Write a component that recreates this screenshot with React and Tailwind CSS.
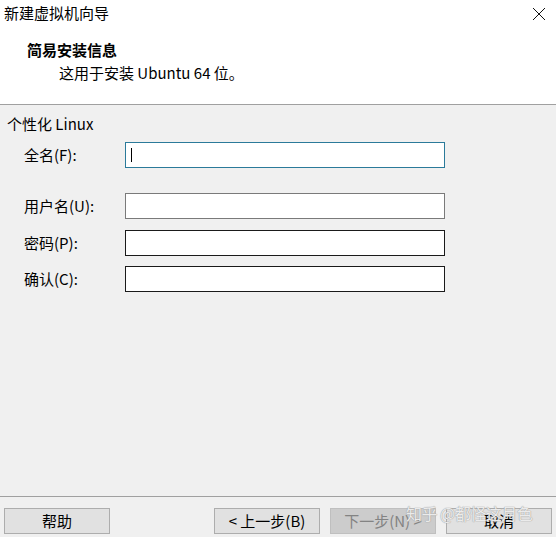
import React from 'react';

const font = { fontFamily: '"Noto Sans CJK SC", "Noto Sans", sans-serif' };

const Field = ({ label, focused, border }) => (
  <div className="flex items-center h-[26px]">
    <span className="w-[125px] pl-[24px] text-[15px] text-black">{label}</span>
    <div className={`relative w-[320px] h-[26px] bg-white border ${border}`}>
      {focused && <div className="absolute left-[5px] top-[5px] w-px h-[14px] bg-black"></div>}
    </div>
  </div>
);

const Btn = ({ children, disabled }) => (
  <button
    className={`w-[106px] h-[26px] border text-[15px] flex items-center justify-center ${
      disabled ? 'bg-[#cccccc] border-[#bfbfbf] text-[#838383]' : 'bg-[#e1e1e1] border-[#adadad] text-black'
    }`}
  >
    {children}
  </button>
);

export default function App() {
  return (
    <div className="relative w-[556px] h-[537px] flex flex-col bg-[#f0f0f0] overflow-hidden" style={font}>
      {/* header */}
      <div className="bg-white h-[105px] border-b border-[#a0a0a0] flex flex-col">
        <div className="h-[27px] flex items-center justify-between pl-[4px] pr-[10px]">
          <span className="text-[15px] text-black">新建虚拟机向导</span>
          <svg width="14" height="14" viewBox="0 0 14 14">
            <path d="M1 1 L13 13 M13 1 L1 13" stroke="#111" strokeWidth="1" />
          </svg>
        </div>
        <div className="mt-[13px] pl-[27px] text-[15px] font-bold leading-[20px] text-black">简易安装信息</div>
        <div className="mt-[3px] pl-[59px] text-[15px] leading-[20px] text-black">这用于安装 Ubuntu 64 位。</div>
      </div>

      {/* body */}
      <div className="flex-1 flex flex-col">
        <div className="pt-[9px] pl-[7px] text-[15px] leading-[20px] text-black">个性化 Linux</div>
        <div className="mt-[8px] flex flex-col">
          <Field label="全名(F):" focused border="border-[#2b7a9a]" />
          <div className="mt-[25px]">
            <Field label="用户名(U):" border="border-[#7a7a7a]" />
          </div>
          <div className="mt-[11px]">
            <Field label="密码(P):" border="border-[#1a1a1a]" />
          </div>
          <div className="mt-[10px]">
            <Field label="确认(C):" border="border-[#1a1a1a]" />
          </div>
        </div>
      </div>

      {/* footer */}
      <div className="h-[41px] border-t border-[#a0a0a0] flex items-start pt-[11px] px-[4px]">
        <Btn>帮助</Btn>
        <div className="flex-1"></div>
        <div className="flex gap-[10px]">
          <Btn>&lt; 上一步(B)</Btn>
          <Btn disabled>下一步(N) &gt;</Btn>
          <Btn>取消</Btn>
        </div>
      </div>

      {/* watermark */}
      <div
        className="absolute left-[406px] top-[501px] text-[16px] tracking-[-0.5px] text-white/80 pointer-events-none"
        style={{ textShadow: '0 0 1px #9a9a9a, 0 0 1px #9a9a9a' }}
      >
        知乎 @都怪这月色
      </div>
    </div>
  );
}
